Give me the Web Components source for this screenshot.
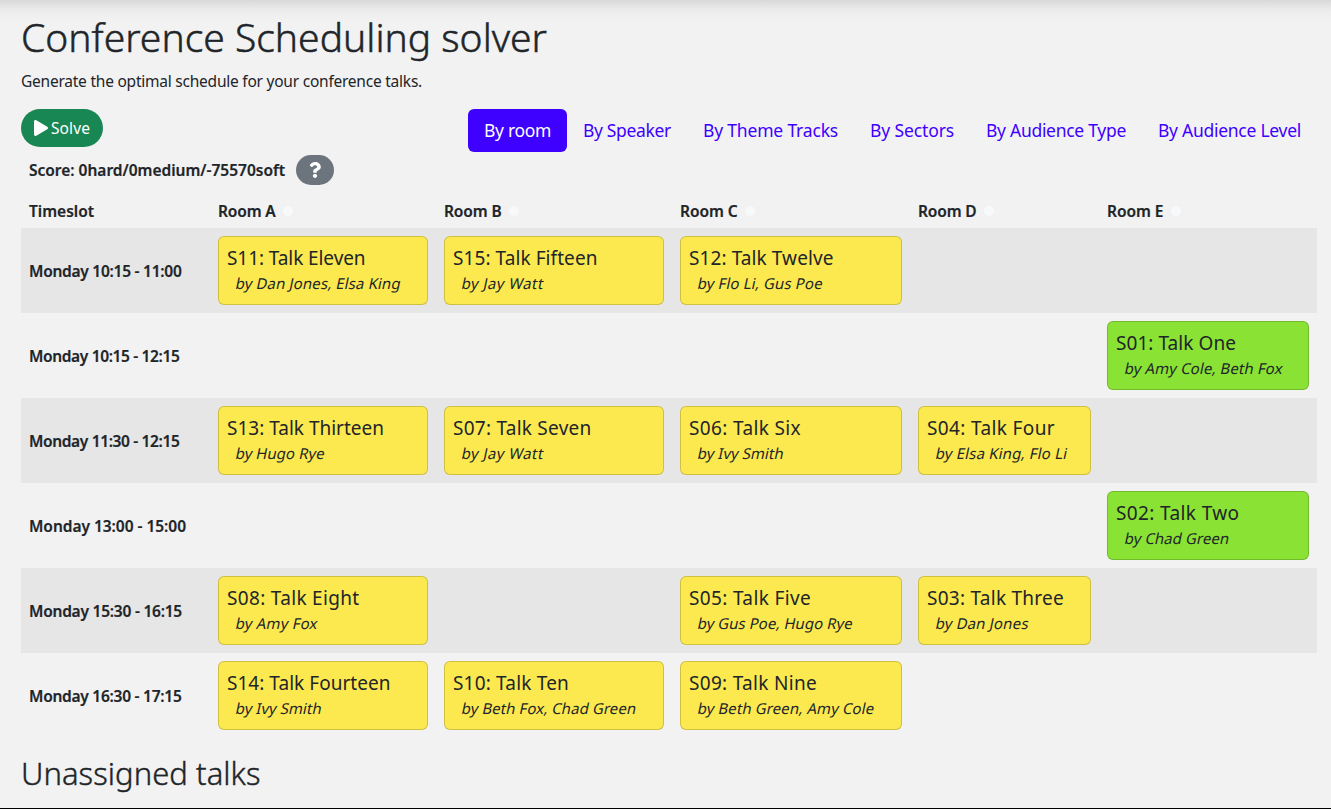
<!DOCTYPE html>
<html lang="en">
<head>
<meta charset="utf-8">
<title>Conference Scheduling solver</title>
<style>
html,body{margin:0;height:100%;overflow:hidden}
body{background:#f2f2f2;color:#212529;font:16px/24px "Noto Sans",sans-serif}
</style>
</head>
<body>
<schedule-app></schedule-app>
<script>
const define = (name, cls) => customElements.define(name, cls);

/* A run of text tracked so that it fills the width in its w attribute.
   The slant attribute obliques the upright face. */
define('fit-text', class extends HTMLElement {
  connectedCallback() {
    const root = this.attachShadow({mode: 'open'});
    root.innerHTML = '<style>:host{display:inline-block;white-space:pre}</style><span><slot></slot></span>';
    const want = parseFloat(this.getAttribute('w'));
    const have = root.querySelector('span').getBoundingClientRect().width;
    this.style.letterSpacing = ((want - have) / this.textContent.length) + 'px';
    this.style.width = want + 'px';
    if (this.hasAttribute('slant')) {
      this.style.transformOrigin = '0 70%';
      this.style.transform = 'skewX(-12deg)';
    }
  }
});

define('talk-card', class extends HTMLElement {
  connectedCallback() {
    const a = n => this.getAttribute(n);
    this.attachShadow({mode: 'open'}).innerHTML = `<style>
      :host{display:block;box-sizing:border-box;height:69px;margin:8px;padding:9px 7px 0 8px;border:1px solid rgba(0,0,0,.176);border-radius:6px;background:#fce94f;background-clip:border-box}
      :host([green]){background:#8ae234}
      h5{margin:0;font-size:19px;font-weight:400;line-height:24px;height:25px}
      p{margin:0 0 0 8px;font-size:15px;line-height:24px}
      fit-text{display:block}
    </style><h5><fit-text w="${a('tw')}">${a('talk')}</fit-text></h5><p><fit-text slant w="${a('sw')}">${a('by')}</fit-text></p>`;
  }
});

define('room-head', class extends HTMLElement {
  connectedCallback() {
    this.attachShadow({mode: 'open'}).innerHTML = `<style>
      :host{display:flex;align-items:center;gap:7.5px;padding:0 8px;font-weight:600;font-size:15.5px;-webkit-text-stroke:.2px}
      i{width:10px;height:10px;border-radius:50%;background:#f8f9fa}
    </style><fit-text w="${this.getAttribute('w')}">${this.getAttribute('label')}</fit-text>${this.hasAttribute('plain') ? '' : '<i></i>'}`;
  }
});

define('time-row', class extends HTMLElement {
  connectedCallback() {
    this.attachShadow({mode: 'open'}).innerHTML = `<style>
      :host{display:grid;grid-template-columns:189px 226px 236px 238px 189px 218px;height:85px}
      :host(:nth-of-type(odd)){background:#e6e6e6}
      .t{align-self:center;padding-left:8px;font-weight:600;font-size:15.5px;-webkit-text-stroke:.2px}
    </style><div class="t"><fit-text w="${this.getAttribute('w')}">${this.getAttribute('time')}</fit-text></div><slot></slot>`;
  }
});

define('view-tab', class extends HTMLElement {
  connectedCallback() {
    this.attachShadow({mode: 'open'}).innerHTML = `<style>
      :host{display:block;padding:8px 16px;height:27px;line-height:27px;font-size:17.5px;border-radius:6px;color:#3e00ff}
      :host([active]){background:#3e00ff;color:#fff}
      fit-text{display:block}
    </style><fit-text w="${this.getAttribute('w')}">${this.getAttribute('label')}</fit-text>`;
  }
});

define('solve-button', class extends HTMLElement {
  connectedCallback() {
    this.attachShadow({mode: 'open'}).innerHTML = `<style>
      :host{display:flex;align-items:center;box-sizing:border-box;width:82px;height:38px;padding-left:13px;border-radius:19px;background:#198754;color:#fff;font-size:15.5px}
      svg{width:14px;height:16px;margin-right:3px}
    </style><svg viewBox="0 0 448 512"><path fill="currentColor" d="M424.4 214.7L72.4 6.6C43.8-10.3 0 6.1 0 47.9V464c0 37.5 40.7 60.1 72.4 41.3l352-208c31.4-18.5 31.5-64.1 0-82.6z"/></svg><fit-text w="39">Solve</fit-text>`;
  }
});

define('help-button', class extends HTMLElement {
  connectedCallback() {
    this.attachShadow({mode: 'open'}).innerHTML = `<style>
      :host{display:flex;align-items:center;justify-content:center;width:38px;height:30px;border-radius:15px;background:#6c757d;color:#fff}
      svg{width:12px;height:16px}
    </style><svg viewBox="0 0 384 512"><path fill="currentColor" d="M202.021 0C122.202 0 70.503 32.703 29.914 91.026c-7.363 10.58-5.093 25.086 5.178 32.874l43.138 32.709c10.373 7.865 25.132 6.026 33.253-4.148 25.049-31.381 43.63-49.449 82.757-49.449 30.764 0 68.816 19.799 68.816 49.631 0 22.552-18.617 34.134-48.993 51.164-35.423 19.86-82.299 44.576-82.299 106.405V320c0 13.255 10.745 24 24 24h72.471c13.255 0 24-10.745 24-24v-5.773c0-42.86 125.268-44.645 125.268-160.627C377.504 66.256 286.902 0 202.021 0zM192 373.459c-38.196 0-69.271 31.075-69.271 69.271 0 38.195 31.075 69.27 69.271 69.27s69.271-31.075 69.271-69.271-31.075-69.27-69.271-69.27z"/></svg>`;
  }
});

/* Each row: label, label width, then one cell per room: [title, width, speakers, width, green]. */
const rooms = [['Room A', 57.5], ['Room B', 57.5], ['Room C', 57.5], ['Room D', 58.5], ['Room E', 56.5]];
const rows = [
  ['Monday 10:15 - 11:00', 152.5, ['S11: Talk Eleven', 138.5, 'by Dan Jones, Elsa King', 165], ['S15: Talk Fifteen', 144.5, 'by Jay Watt', 82], ['S12: Talk Twelve', 144.5, 'by Flo Li, Gus Poe', 125], 0, 0],
  ['Monday 10:15 - 12:15', 150.5, 0, 0, 0, 0, ['S01: Talk One', 120, 'by Amy Cole, Beth Fox', 158, 1]],
  ['Monday 11:30 - 12:15', 150.5, ['S13: Talk Thirteen', 157, 'by Hugo Rye', 89], ['S07: Talk Seven', 138.5, 'by Jay Watt', 82], ['S06: Talk Six', 112, 'by Ivy Smith', 86], ['S04: Talk Four', 128, 'by Elsa King, Flo Li', 131.5], 0],
  ['Monday 13:00 - 15:00', 157, 0, 0, 0, 0, ['S02: Talk Two', 123.5, 'by Chad Green', 104.5, 1]],
  ['Monday 15:30 - 16:15', 153, ['S08: Talk Eight', 132.5, 'by Amy Fox', 82], 0, ['S05: Talk Five', 122, 'by Gus Poe, Hugo Rye', 155], ['S03: Talk Three', 137, 'by Dan Jones', 93], 0],
  ['Monday 16:30 - 17:15', 152.5, ['S14: Talk Fourteen', 163.5, 'by Ivy Smith', 86], ['S10: Talk Ten', 116, 'by Beth Fox, Chad Green', 174.5], ['S09: Talk Nine', 128, 'by Beth Green, Amy Cole', 176.5], 0, 0]
];
const tabs = [['By room', 67], ['By Speaker', 88], ['By Theme Tracks', 135], ['By Sectors', 84], ['By Audience Type', 140], ['By Audience Level', 143]];

define('schedule-app', class extends HTMLElement {
  connectedCallback() {
    const cell = c => c ? `<talk-card talk="${c[0]}" tw="${c[1]}" by="${c[2]}" sw="${c[3]}" ${c[4] ? 'green' : ''}></talk-card>` : '<div></div>';
    this.attachShadow({mode: 'open'}).innerHTML = `<style>
      :host{display:block;box-sizing:border-box;height:809px;overflow:hidden;padding:13px 14px 0 21px;border-bottom:1px solid #000;background:linear-gradient(#d8d8d8,#e3e3e3 5px,#ececec 11px,#f0f0f0 17px,#f2f2f2 23px)}
      h1{margin:0 0 8px;height:48px;font-size:39px;line-height:48px;font-weight:300;-webkit-text-stroke:.5px}
      p{margin:0;height:24px;font-size:15.5px}
      .bar{display:flex;justify-content:space-between;align-items:flex-start;margin-top:16px;height:46px}
      nav{display:flex}
      .score{display:flex;align-items:center;gap:11px;padding-left:8px;height:30px;font-weight:600;font-size:15.5px;-webkit-text-stroke:.2px}
      .head{display:grid;grid-template-columns:189px 226px 236px 238px 189px 218px;height:34px;align-items:center;margin-top:9px}
      h2{margin:16px 0 0;font-size:31px;font-weight:300;-webkit-text-stroke:.4px;line-height:38px}
    </style>
    <h1><fit-text w="526">Conference Scheduling solver</fit-text></h1>
    <p><fit-text w="401">Generate the optimal schedule for your conference talks.</fit-text></p>
    <div class="bar"><solve-button></solve-button><nav>${tabs.map((t, i) => `<view-tab label="${t[0]}" w="${t[1]}" ${i ? '' : 'active'}></view-tab>`).join('')}</nav></div>
    <div class="score"><fit-text w="256">Score: 0hard/0medium/-75570soft</fit-text><help-button></help-button></div>
    <div class="head"><room-head plain label="Timeslot" w="65"></room-head>${rooms.map(r => `<room-head label="${r[0]}" w="${r[1]}"></room-head>`).join('')}</div>
    <section>${rows.map(([t, w, ...c]) => `<time-row time="${t}" w="${w}">${c.map(cell).join('')}</time-row>`).join('')}</section>
    <h2><fit-text w="239.5">Unassigned talks</fit-text></h2>`;
  }
});
</script>
</body>
</html>
